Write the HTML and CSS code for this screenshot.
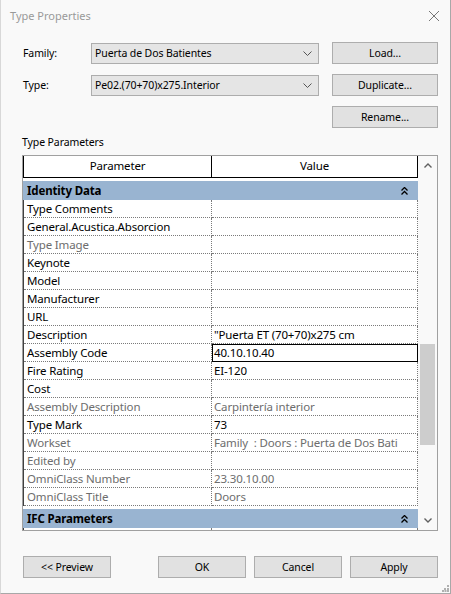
FILE: index.html
```html
<!DOCTYPE html>
<html lang="en">
<head>
    <meta charset="UTF-8">
    <title>Type Properties</title>
    <link rel="stylesheet" href="styles.css">
</head>
<body>
<div class="window">
    <div class="titlebar">
        <span class="title">Type Properties</span>
        <svg class="close" width="12" height="12" viewBox="0 0 12 12"><path d="M1 1L11 11M11 1L1 11" stroke="#777" stroke-width="1"/></svg>
    </div>

    <div class="selectors">
        <span class="lbl">Family:</span>
        <div class="combo"><span>Puerta de Dos Batientes</span>
            <svg width="9" height="5" viewBox="0 0 9 5"><path d="M0.5 0.5L4.5 4.5L8.5 0.5" stroke="#555" fill="none"/></svg>
        </div>
        <button class="btn">Load...</button>

        <span class="lbl">Type:</span>
        <div class="combo"><span>Pe02.(70+70)x275.Interior</span>
            <svg width="9" height="5" viewBox="0 0 9 5"><path d="M0.5 0.5L4.5 4.5L8.5 0.5" stroke="#555" fill="none"/></svg>
        </div>
        <button class="btn">Duplicate...</button>

        <span></span><span></span>
        <button class="btn">Rename...</button>
    </div>

    <div class="section-lbl">Type Parameters</div>

    <div class="grid">
        <div class="grid-main">
            <div class="grid-head"><div>Parameter</div><div>Value</div></div>

            <div class="group">Identity Data
                <svg width="7" height="8" viewBox="0 0 7 8"><path d="M0.5 3.5L3.5 0.5L6.5 3.5M0.5 7.5L3.5 4.5L6.5 7.5" stroke="#000" stroke-width="1.3" fill="none"/></svg>
            </div>
            <div class="row"><div class="name">Type Comments</div><div class="value"></div></div>
            <div class="row"><div class="name">General.Acustica.Absorcion</div><div class="value"></div></div>
            <div class="row ro"><div class="name">Type Image</div><div class="value"></div></div>
            <div class="row"><div class="name">Keynote</div><div class="value"></div></div>
            <div class="row"><div class="name">Model</div><div class="value"></div></div>
            <div class="row"><div class="name">Manufacturer</div><div class="value"></div></div>
            <div class="row"><div class="name">URL</div><div class="value"></div></div>
            <div class="row"><div class="name">Description</div><div class="value">"Puerta ET (70+70)x275 cm</div></div>
            <div class="row"><div class="name">Assembly Code</div><div class="value selected">40.10.10.40</div></div>
            <div class="row"><div class="name">Fire Rating</div><div class="value">EI-120</div></div>
            <div class="row"><div class="name">Cost</div><div class="value"></div></div>
            <div class="row ro"><div class="name">Assembly Description</div><div class="value">Carpintería interior</div></div>
            <div class="row"><div class="name">Type Mark</div><div class="value">73</div></div>
            <div class="row ro"><div class="name">Workset</div><div class="value">Family&nbsp; : Doors : Puerta de Dos Bati</div></div>
            <div class="row ro"><div class="name">Edited by</div><div class="value"></div></div>
            <div class="row ro"><div class="name">OmniClass Number</div><div class="value">23.30.10.00</div></div>
            <div class="row ro"><div class="name">OmniClass Title</div><div class="value">Doors</div></div>

            <div class="group">IFC Parameters
                <svg width="7" height="8" viewBox="0 0 7 8"><path d="M0.5 3.5L3.5 0.5L6.5 3.5M0.5 7.5L3.5 4.5L6.5 7.5" stroke="#000" stroke-width="1.3" fill="none"/></svg>
            </div>
            <div class="row"><div class="name"></div><div class="value"></div></div>
        </div>
        <div class="scrollbar">
            <svg width="8" height="5" viewBox="0 0 8 5"><path d="M0.5 4.5L4 1L7.5 4.5" stroke="#606060" stroke-width="1.4" fill="none"/></svg>
            <div class="track"><div class="thumb"></div></div>
            <svg width="8" height="5" viewBox="0 0 8 5"><path d="M0.5 0.5L4 4L7.5 0.5" stroke="#606060" stroke-width="1.4" fill="none"/></svg>
        </div>
    </div>

    <div class="footer">
        <button class="btn">&lt;&lt; Preview</button>
        <div class="footer-right">
            <button class="btn">OK</button>
            <button class="btn">Cancel</button>
            <button class="btn">Apply</button>
        </div>
    </div>

    <svg class="grip" width="7" height="7" viewBox="0 0 7 7" fill="#b0b0b0">
        <rect x="5" y="0" width="2" height="2"/><rect x="2" y="3" width="2" height="2"/><rect x="5" y="3" width="2" height="2"/>
        <rect x="0" y="5" width="2" height="2"/><rect x="2.5" y="5" width="2" height="2"/><rect x="5" y="5" width="2" height="2"/>
    </svg>
</div>
</body>
</html>
```

FILE: styles.css
```css
* {
    box-sizing: border-box;
}
body {
    margin: 0;
    background: #fff;
    font-family: "Noto Sans", "Open Sans", sans-serif;
}
.window {
    position: relative;
    width: 451px;
    height: 594px;
    background: #f9f9f9;
    border-left: 1px solid #d8d8d8;
    border-right: 1px solid #a8a8a8;
    border-bottom: 1px solid #a8a8a8;
    color: #000;
}

/* title */
.titlebar {
    height: 32px;
    display: flex;
    align-items: center;
    justify-content: space-between;
    padding: 0 9px 1px 9px;
}
.title {
    font-size: 11px;
    color: #999;
}
.close {
    margin-right: 1px;
}

/* family / type */
.selectors {
    display: grid;
    grid-template-columns: 69px 228px 119px;
    grid-template-rows: 22px 22px 22px;
    row-gap: 10px;
    padding-left: 21px;
    margin-top: 10px;
    font-size: 10.5px;
    letter-spacing: -0.1px;
    align-items: center;
}
.lbl {
    padding-left: 1px;
}
.combo {
    height: 21px;
    background: #e5e5e5;
    border: 1px solid #adadad;
    display: flex;
    align-items: center;
    justify-content: space-between;
    padding: 0 6px 0 3px;
}
.btn {
    height: 22px;
    background: #e1e1e1;
    border: 1px solid #adadad;
    font-family: inherit;
    font-size: 10.5px;
    letter-spacing: -0.1px;
    color: #000;
    padding: 0;
}
.selectors .btn {
    margin-left: 13px;
}

.section-lbl {
    font-size: 10.5px;
    letter-spacing: -0.1px;
    padding-left: 21px;
    margin-top: 7px;
    height: 20px;
    line-height: 15px;
}

/* property grid */
.grid {
    margin-left: 21px;
    width: 416px;
    height: 376px;
    border: 1px solid #a0a0a0;
    background: #fff;
    display: flex;
    font-size: 11.5px;
    letter-spacing: -0.15px;
}
.grid-main {
    width: 395px;
    height: 374px;
    overflow: hidden;
}
.grid-head {
    display: flex;
    height: 22px;
    border: 1px solid #000;
    border-top: none;
}
.grid-head div {
    line-height: 20px;
    text-align: center;
}
.grid-head div:first-child {
    width: 188px;
    border-right: 1px solid #000;
}
.grid-head div:last-child {
    flex: 1;
}
.group {
    margin-top: 3px;
    height: 19px;
    background: #99b4d1;
    font-weight: bold;
    display: flex;
    align-items: center;
    justify-content: space-between;
    padding: 0 10px 0 4px;
}
.row {
    display: flex;
    height: 18px;
    line-height: 17px;
    border-left: 1px solid #404040;
}
.row .name,
.row .value {
    border-right: 1px dotted #7a7a7a;
    border-bottom: 1px dotted #7a7a7a;
    white-space: nowrap;
    overflow: hidden;
}
.row .name {
    width: 188px;
    padding-left: 3px;
}
.row .value {
    width: 206px;
    padding-left: 2px;
}
.row.ro {
    color: #6d6d6d;
}
.value.selected {
    outline: 1px solid #000;
    outline-offset: -1px;
}

.scrollbar {
    width: 19px;
    background: #f9f9f9;
    display: flex;
    flex-direction: column;
    align-items: center;
    padding-top: 7px;
}
.track {
    flex: 1;
    width: 100%;
    padding: 176px 2px 0 2px;
}
.thumb {
    height: 101px;
    background: #cdcdcd;
}
.scrollbar svg:last-child {
    margin: 0 0 7px 1px;
}

/* bottom buttons */
.footer {
    display: flex;
    justify-content: space-between;
    padding: 0 12px 0 22px;
    margin-top: 25px;
}
.footer .btn {
    width: 88px;
}
.footer-right {
    display: flex;
    gap: 8px;
}
.grip {
    position: absolute;
    right: 1px;
    bottom: 1px;
}
```
